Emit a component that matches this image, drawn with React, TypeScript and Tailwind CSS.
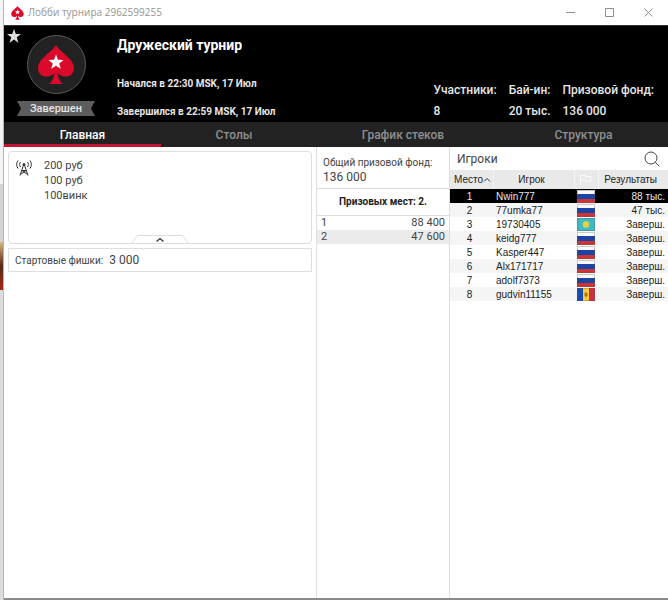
import { useState } from 'react'

type Country = 'ru' | 'kz' | 'md'

const tabs = ['Главная', 'Столы', 'График стеков', 'Структура']

const stats = [
  { label: 'Участники:', value: '8' },
  { label: 'Бай-ин:', value: '20 тыс.' },
  { label: 'Призовой фонд:', value: '136 000' },
]

const payouts = [
  { place: 1, amount: '88 400' },
  { place: 2, amount: '47 600' },
]

const players: { name: string; country: Country; result: string }[] = [
  { name: 'Nwin777', country: 'ru', result: '88 тыс.' },
  { name: '77umka77', country: 'ru', result: '47 тыс.' },
  { name: '19730405', country: 'kz', result: 'Заверш.' },
  { name: 'keidg777', country: 'ru', result: 'Заверш.' },
  { name: 'Kasper447', country: 'ru', result: 'Заверш.' },
  { name: 'Alx171717', country: 'ru', result: 'Заверш.' },
  { name: 'adolf7373', country: 'ru', result: 'Заверш.' },
  { name: 'gudvin11155', country: 'md', result: 'Заверш.' },
]

function Spade({ className }: { className: string }) {
  return (
    <svg viewBox="0 0 36 40" className={className} aria-hidden="true">
      <path
        d="M18 0C14 7 0 14 0 23c0 6 4 8.500 8.500 8.500 3.500 0 6.500-1.500 8-3.500-.5 4.500-2.500 8.500-5 11h13c-2.500-2.500-4.500-6.500-5-11 1.500 2 4.500 3.500 8 3.500C32 31.500 36 29 36 23 36 14 22 7 18 0z"
        fill="#db0a2b"
      />
      <path d="M18 9.500l2 5.200 5.600.2-4.400 3.500 1.600 5.400-4.800-3.100-4.800 3.100 1.600-5.400-4.400-3.500 5.600-.2z" fill="#fff" />
    </svg>
  )
}

function Flag({ country }: { country: Country }) {
  return (
    <svg viewBox="0 0 18 13" className="mx-auto block h-[13px] w-[18px]" aria-hidden="true">
      {country === 'ru' && (
        <>
          <path d="M0 0h18v5H0z" fill="#fafafa" />
          <path d="M0 4h18v5H0z" fill="#1c44a4" />
          <path d="M0 9h18v4H0z" fill="#cf3434" />
        </>
      )}
      {country === 'kz' && (
        <>
          <path d="M0 0h18v13H0z" fill="#3fb9c4" />
          <circle cx="9" cy="6.500" r="3.500" fill="#b9cf6b" />
          <circle cx="9" cy="6.500" r="2.500" fill="#ecd23f" />
        </>
      )}
      {country === 'md' && (
        <>
          <path d="M0 0h6v13H0z" fill="#1c4bae" />
          <path d="M6 0h6v13H6z" fill="#f5cd2e" />
          <path d="M12 0h6v13h-6z" fill="#d22a40" />
          <path d="M9 4l1.500 1.500v2L9 9.500 7.500 7.500v-2z" fill="#a3752b" />
        </>
      )}
      <path d="M.5.5h17v12H.5z" fill="none" stroke="#555" strokeOpacity=".3" />
    </svg>
  )
}

// Sliver of the desktop that stays visible beside the window
function DesktopEdge() {
  return (
    <div className="flex w-1 shrink-0 flex-col border-r border-[#b5b5b7] bg-[#dcdde1]" aria-hidden="true">
      <div className="h-[184px] bg-[#f3f4f6]" />
      <div className="h-[58px] bg-[#d5d5d9]" />
      <div className="h-12 bg-linear-to-b from-[#d8b985] via-[#5a2716] to-[#a32412]" />
    </div>
  )
}

function TitleBar() {
  return (
    <div className="flex h-[25px] items-center bg-white pl-[7px]">
      <Spade className="h-[14px] w-[13px]" />
      <span className="ml-1 flex-1 font-['Open_Sans',sans-serif] text-[10px] text-[#949494]">Лобби турнира 2962599255</span>
      <div className="flex h-full text-[#8e8e8e]">
        <button type="button" aria-label="Свернуть" className="flex w-[39px] items-center justify-center">
          <svg viewBox="0 0 9 9" className="size-[9px]"><path d="M0 4.500h9" stroke="currentColor" /></svg>
        </button>
        <button type="button" aria-label="Развернуть" className="flex w-[39px] items-center justify-center">
          <svg viewBox="0 0 9 9" className="size-[9px]"><path d="M.5.5h8v8h-8z" fill="none" stroke="currentColor" /></svg>
        </button>
        <button type="button" aria-label="Закрыть" className="flex w-[39px] items-center justify-center">
          <svg viewBox="0 0 9 9" className="size-[9px]"><path d="M.5.5l8 8M8.500.5l-8 8" fill="none" stroke="currentColor" /></svg>
        </button>
      </div>
    </div>
  )
}

function Header() {
  return (
    <header className="flex h-[97px] border-t border-[#333] bg-black text-[#e6e6e6]">
      <button type="button" aria-label="В избранное" className="flex w-[13px] shrink-0 items-start pt-[3px] pl-[3px]">
        <svg viewBox="0 0 14 14" className="size-[14px] shrink-0">
          <path d="M7 0l1.800 5H14l-4.200 3.200L11.400 14 7 10.500 2.600 14l1.600-5.800L0 5h5.200z" fill="#dedede" />
        </svg>
      </button>
      <div className="flex w-[78px] shrink-0 flex-col items-center gap-[7px] pt-[9px]">
        <div className="flex size-[59px] shrink-0 items-center justify-center rounded-full border border-[#5a5a5a] bg-[#222]">
          <Spade className="h-10 w-9" />
        </div>
        <div className="grid w-full *:col-start-1 *:row-start-1">
          <svg viewBox="0 0 78 15" className="h-[15px] w-full" preserveAspectRatio="none" aria-hidden="true">
            <path d="M0 0h78l-4 7.500 4 7.500H0l4-7.500z" fill="#5d5d5d" />
          </svg>
          <span className="text-center text-[11px] leading-[15px] font-medium">Завершен</span>
        </div>
      </div>
      <div className="ml-[22px] flex-1 whitespace-nowrap">
        <h1 className="pt-[9px] text-sm leading-5 font-bold text-white">Дружеский турнир</h1>
        <p className="mt-[21px] text-[10px] leading-4 font-bold">Начался в 22:30 MSK, 17 Июл</p>
        <p className="mt-3 text-[10px] leading-4 font-bold">Завершился в 22:59 MSK, 17 Июл</p>
      </div>
      <dl className="flex gap-3 pt-[54px] pr-[14px] text-xs leading-[21px] font-medium whitespace-nowrap">
        {stats.map((stat) => (
          <div key={stat.label}>
            <dt>{stat.label}</dt>
            <dd>{stat.value}</dd>
          </div>
        ))}
      </dl>
    </header>
  )
}

function InfoColumn() {
  return (
    <section className="flex min-w-0 flex-1 flex-col gap-1 px-1 pt-1">
      <div className="flex h-[93px] flex-col rounded-sm border border-[#dedede]">
        <div className="flex flex-1 gap-3 pt-[6px] pl-[7px]">
          <svg viewBox="0 0 16 16" className="mt-[2px] size-4 shrink-0" fill="none" stroke="#333" aria-hidden="true">
            <path d="M7.500 5L4 15.500M8.500 5L12 15.500M6 10.500h4M4.500 14.500L10 10.500M11.500 14.500L6 10.500" />
            <path d="M4.500 2c-1.200 1.500-1.200 3.500 0 5M11.500 2c1.200 1.500 1.200 3.500 0 5M2 .5c-1.800 2.500-1.800 5.500 0 8M14 .5c1.800 2.500 1.800 5.500 0 8" />
            <circle cx="8" cy="4.500" r="1" fill="#333" />
          </svg>
          <p className="text-[11px] leading-[15px]">
            200 руб<br />100 руб<br />100винк
          </p>
        </div>
        <button type="button" aria-label="Свернуть описание" className="mx-auto block h-2">
          <svg viewBox="0 0 58 8" className="h-2 w-[58px]" fill="none" aria-hidden="true">
            <path d="M0 8C4 7 4 .5 8 .5h42c4 0 4 6.500 8 7.500" stroke="#dedede" />
            <path d="M25.500 6.500L29 3.500l3.500 3" stroke="#333" strokeWidth="1.300" />
          </svg>
        </button>
      </div>
      <div className="flex h-6 items-center gap-[6px] border border-[#dedede] pl-[6px]">
        <span className="text-[10px]">Стартовые фишки:</span>
        <span className="text-xs">3 000</span>
      </div>
    </section>
  )
}

function PrizeColumn() {
  return (
    <section className="w-[134px] shrink-0 border-x border-[#dedede]">
      <div className="h-[42px] border-b border-[#dedede] pt-2 pl-[6px] whitespace-nowrap">
        <div className="text-[10px] leading-[15px]">Общий призовой фонд:</div>
        <div className="text-xs leading-[14px]">136 000</div>
      </div>
      <table className="w-full text-[11px]">
        <caption className="h-[27px] border-b border-[#dedede] text-[10px] leading-[26px] font-bold text-[#222]">Призовых мест: 2.</caption>
        <tbody>
          {payouts.map((payout) => (
            <tr key={payout.place} className="h-[14px] leading-[14px] even:bg-[#ececec]">
              <td className="p-0 pl-1">{payout.place}</td>
              <td className="p-0 pr-1 text-right">{payout.amount}</td>
            </tr>
          ))}
        </tbody>
      </table>
    </section>
  )
}

function PlayersColumn() {
  return (
    <section className="w-[218px] shrink-0">
      <div className="flex h-[23px] items-center justify-between pr-2 pl-[7px]">
        <h2 className="text-xs">Игроки</h2>
        <button type="button" aria-label="Поиск игрока">
          <svg viewBox="0 0 16 16" className="block size-4" fill="none" stroke="#444" aria-hidden="true">
            <circle cx="7" cy="7" r="6" />
            <path d="M11.300 11.300l4 4" />
          </svg>
        </button>
      </div>
      <table className="w-full table-fixed font-['Liberation_Sans',sans-serif] text-[10px] text-[#222]">
        <thead className="bg-[#e9e9e9]">
          <tr className="h-[19px] leading-[19px]">
            <th className="w-[43px] border-r border-[#f5f5f5] p-0 pl-1 text-left font-normal">
              <span className="flex items-center">
                Место
                <svg viewBox="0 0 8 5" className="h-[5px] w-2 shrink-0" fill="none" stroke="#333" aria-hidden="true">
                  <path d="M1 4.500l3-3 3 3" />
                </svg>
              </span>
            </th>
            <th className="border-r border-[#f5f5f5] p-0 pr-1 font-normal">Игрок</th>
            <th className="w-[24px] border-r border-[#f5f5f5] p-0" aria-label="Страна">
              <svg viewBox="0 0 14 11" className="mx-auto h-[11px] w-[14px]" fill="none" stroke="#fafafa" aria-hidden="true">
                <path d="M1.500 0v11M1.500 1.500h5v1h6l-2 2.500 2 2h-6v-1h-5" />
              </svg>
            </th>
            <th className="w-[70px] p-0 pr-[11px] text-right font-normal">Результаты</th>
          </tr>
        </thead>
        <tbody>
          {players.map((player, i) => (
            <tr
              key={player.name}
              className={i === 0 ? 'h-[14px] bg-black leading-[13px] text-[#e8e8e8]' : 'h-[14px] leading-[13px] even:bg-[#f5f5f5]'}
            >
              <td className="p-0 pt-px pr-1 text-center">{i + 1}</td>
              <td className="p-0 pt-px pl-[3px]">{player.name}</td>
              <td className="p-0"><Flag country={player.country} /></td>
              <td className="p-0 pt-px pr-[3px] text-right">{player.result}</td>
            </tr>
          ))}
        </tbody>
      </table>
    </section>
  )
}

export default function App() {
  const [active, setActive] = useState(0)

  return (
    <div className="flex min-h-screen font-[Roboto,sans-serif] text-[#444]">
      <DesktopEdge />
      <div className="flex min-w-0 flex-1 flex-col border-b-2 border-[#8c8c8c] bg-white">
        <TitleBar />
        <Header />
        <nav className="grid h-[25px] grid-cols-[157fr_146fr_192fr_169fr] bg-[#222]">
          {tabs.map((tab, i) => (
            <button
              key={tab}
              type="button"
              onClick={() => setActive(i)}
              className={
                i === active
                  ? 'border-b-[3px] border-[#c4142f] pt-[3px] text-xs font-medium text-white'
                  : 'border-b-[3px] border-transparent pt-[3px] text-xs font-medium text-[#8f8f8f]'
              }
            >
              {tab}
            </button>
          ))}
        </nav>
        <main className="flex flex-1">
          <InfoColumn />
          <PrizeColumn />
          <PlayersColumn />
        </main>
      </div>
    </div>
  )
}
